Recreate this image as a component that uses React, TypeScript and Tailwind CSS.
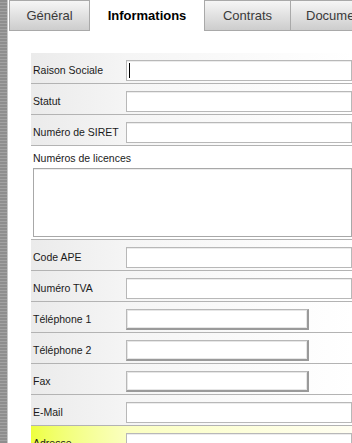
import React from "react";

const font = { fontFamily: '"Liberation Sans", Arial, sans-serif' };

function Row({
  label,
  short,
  highlight,
  cursor,
}: {
  label: string;
  short?: boolean;
  highlight?: boolean;
  cursor?: boolean;
}) {
  const bg = highlight
    ? "bg-gradient-to-r from-[#eeff3c] via-[#fbffc0] via-30% to-[#fffef2]"
    : "bg-gradient-to-r from-[#ebebeb] via-[#f5f5f5] via-30% to-white";
  return (
    <div className={`flex items-start pt-[7px] pb-[2px] border-b border-[#b3b3b3] ${bg}`}>
      <div className="w-[95px] h-[21px] shrink-0 flex items-center pl-[2px] text-[10.5px] text-[#1a1a1a]">
        {label}
      </div>
      {short ? (
        <div className="w-[183px] h-[21px] bg-white border border-[#b8b8b8] border-r-2 border-b-2 border-r-[#9a9a9a] border-b-[#9a9a9a] shadow-[inset_0_0_0_1px_#e6e6e6]" />
      ) : (
        <div className="flex-1 h-[21px] bg-white border border-[#b8b8b8] shadow-[inset_0_1px_0_#ececec] flex items-center">
          {cursor && <div className="ml-[2px] w-px h-[15px] bg-black" />}
        </div>
      )}
    </div>
  );
}

export default function App() {
  return (
    <div className="w-[352px] h-[443px] overflow-hidden flex bg-white" style={font}>
      <div className="w-[8px] shrink-0 h-full bg-[repeating-linear-gradient(0deg,#8e8e8e_0px,#8e8e8e_2px,#a2a2a2_2px,#a2a2a2_3px)] border-r border-[#c8c8c8]" />
      <div className="flex-1 min-w-0 flex flex-col">
        <div className="h-[33px] flex items-start shrink-0 whitespace-nowrap">
          <div className="ml-[1px] w-[81px] h-[31px] shrink-0 border border-[#a9a9a9] bg-gradient-to-b from-[#f6f6f6] to-[#cdcdcd] flex items-center justify-center text-[13px] text-[#3a3a3a]">
            Général
          </div>
          <div className="w-[114px] h-[33px] shrink-0 bg-white flex items-center justify-center pb-[2px] text-[13px] font-bold text-black">
            Informations
          </div>
          <div className="w-[87px] h-[31px] shrink-0 border border-[#a9a9a9] bg-gradient-to-b from-[#f6f6f6] to-[#cdcdcd] flex items-center justify-center text-[13px] text-[#3a3a3a]">
            Contrats
          </div>
          <div className="w-[90px] h-[31px] shrink-0 border border-l-0 border-[#a9a9a9] bg-gradient-to-b from-[#f6f6f6] to-[#cdcdcd] flex items-center pl-[15px] text-[13px] text-[#3a3a3a]">
            Documents
          </div>
        </div>
        <div className="pl-[23px] pt-[20px] flex flex-col">
          <Row label="Raison Sociale" cursor />
          <Row label="Statut" />
          <Row label="Numéro de SIRET" />
          <div className="flex flex-col pt-[5px] pb-[2px] pl-[2px] border-b border-[#b3b3b3] bg-white">
            <div className="h-[14px] leading-[14px] text-[10.5px] text-[#1a1a1a]">Numéros de licences</div>
            <div className="mt-[3px] h-[69px] border border-[#a8a8a8] shadow-[inset_0_1px_0_#ececec] bg-white" />
          </div>
          <Row label="Code APE" />
          <Row label="Numéro TVA" />
          <Row label="Téléphone 1" short />
          <Row label="Téléphone 2" short />
          <Row label="Fax" short />
          <Row label="E-Mail" />
          <Row label="Adresse" highlight />
        </div>
      </div>
    </div>
  );
}
